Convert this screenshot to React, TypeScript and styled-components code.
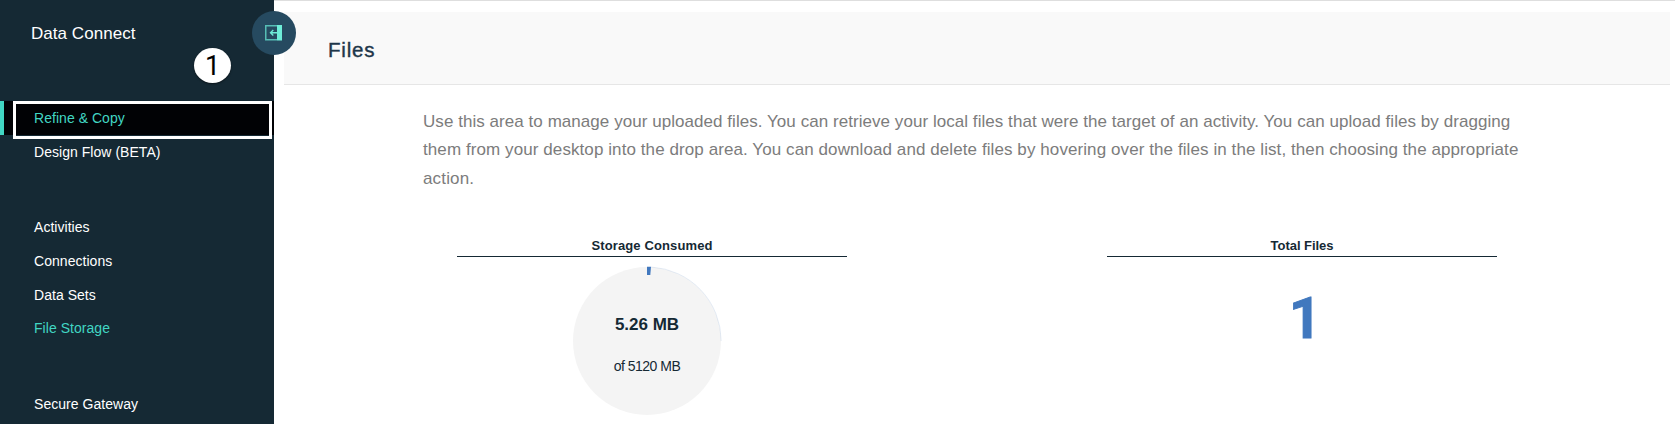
import React from "react";
import styled, { createGlobalStyle } from "styled-components";

const Global = createGlobalStyle`
  * { box-sizing: border-box; }
  body { margin: 0; background: #fff; overflow: hidden; font-family: "Liberation Sans", Arial, sans-serif; }
`;
const Page = styled.div`
  display: flex;
  height: 424px;
  overflow: hidden;
`;
const Sidebar = styled.aside`
  position: relative;
  width: 274px;
  flex: none;
  background: #152934;
  color: #fff;
`;
const Brand = styled.div`
  height: 101px;
  padding: 24px 0 0 31px;
  font-size: 17px;
  line-height: 20px;
  letter-spacing: 0.04px;
`;
const NavGroup = styled.nav`
  display: flex;
  flex-direction: column;
  margin-bottom: 42.1px;
`;
const NavItem = styled.a<{ $current?: boolean; $accent?: boolean }>`
  height: 33.65px;
  padding-left: ${(p) => (p.$current ? 30 : 34)}px;
  border-left: ${(p) => (p.$current ? "4px solid #41d6c3" : "0")};
  background: ${(p) => (p.$current ? "#010205" : "transparent")};
  color: ${(p) => (p.$accent ? "#41d6c3" : "#fff")};
  font-size: 14px;
  line-height: 34px;
  letter-spacing: 0.04px;
`;
const Highlight = styled.div`
  position: absolute;
  left: 13px;
  top: 101px;
  width: 259px;
  height: 38px;
  border: 3px solid #fff;
`;
const Step = styled.div`
  position: absolute;
  left: 194px;
  top: 48px;
  width: 37px;
  height: 35px;
  border-radius: 50%;
  background: #fff;
  color: #000;
  font-family: Roboto, sans-serif;
  font-size: 27px;
  line-height: 36px;
  text-align: center;
  box-shadow: 0 1px 2px rgba(0, 0, 0, 0.5);
`;
const Collapse = styled.button`
  position: absolute;
  left: 252px;
  top: 11px;
  width: 44px;
  height: 44px;
  padding: 0;
  border: 0;
  border-radius: 50%;
  background: #264a60;
  display: flex;
  align-items: center;
  justify-content: center;
`;
const Main = styled.main`
  flex: 1;
  border-top: 1px solid #dedede;
  padding: 11px 5px 0 10px;
`;
const Header = styled.header`
  height: 73px;
  padding: 24px 0 0 44px;
  background: #f9f9f9;
  border-bottom: 1px solid #e6e6e6;
`;
const Title = styled.h1`
  margin: 0;
  color: #1d3649;
  font-size: 20.5px;
  line-height: 28px;
  font-weight: 400;
  -webkit-text-stroke: 0.4px #1d3649;
  letter-spacing: 0.8px;
`;
const Intro = styled.p`
  height: 85px;
  margin: 23px 0 0 139px;
  color: #7c7c7c;
  font-size: 17px;
  line-height: 28.4px;
`;
const Line = styled.span<{ $spacing: number }>`
  display: block;
  white-space: nowrap;
  letter-spacing: ${(p) => p.$spacing}px;
`;
const Stats = styled.section`
  display: flex;
  gap: 260px;
  margin: 44px 0 0 173px;
`;
const Stat = styled.div`
  width: 390px;
`;
const StatTitle = styled.h2<{ $spacing: number }>`
  margin: 0;
  height: 20px;
  border-bottom: 1px solid #152934;
  color: #152934;
  font-size: 13px;
  line-height: 17px;
  text-align: center;
  letter-spacing: ${(p) => p.$spacing}px;
`;
const Gauge = styled.div`
  display: grid;
  width: 150px;
  height: 150px;
  margin: 9px 0 0 115px;
  > * { grid-area: 1 / 1; }
`;
const GaugeText = styled.div`
  display: flex;
  flex-direction: column;
  align-items: center;
  padding-top: 48px;
  color: #152934;
`;
const Used = styled.strong`
  font-size: 17px;
  line-height: 22px;
`;
const Quota = styled.span`
  margin-top: 20px;
  font-size: 14px;
  line-height: 20px;
  letter-spacing: -0.5px;
`;
const Count = styled.div`
  margin-top: 32px;
  padding-left: 6px;
  color: #4178be;
  font-family: Roboto, sans-serif;
  font-size: 57px;
  line-height: 60px;
  font-weight: 700;
  -webkit-text-stroke: 0.8px #4178be;
  text-align: center;
`;

export default function App() {
  return (
    <Page>
      <Global />
      <Sidebar>
        <Brand>Data Connect</Brand>
        <NavGroup>
          <NavItem $current $accent>Refine &amp; Copy</NavItem>
          <NavItem>Design Flow (BETA)</NavItem>
        </NavGroup>
        <NavGroup>
          <NavItem>Activities</NavItem>
          <NavItem>Connections</NavItem>
          <NavItem>Data Sets</NavItem>
          <NavItem $accent>File Storage</NavItem>
        </NavGroup>
        <NavGroup>
          <NavItem>Secure Gateway</NavItem>
        </NavGroup>
        <Highlight />
        <Step>1</Step>
        <Collapse aria-label="Collapse menu">
          <svg width="18" height="16" viewBox="0 0 18 16">
            <path d="M12 .75H.75V14.75H12" fill="none" stroke="#56bdb5" strokeWidth="1.5" />
            <rect x="12" width="5" height="15.5" fill="#6eedd8" />
            <path d="M12 7.8H5.5M8.3 5L5.5 7.8L8.3 10.6" fill="none" stroke="#6eedd8" strokeWidth="1.4" />
          </svg>
        </Collapse>
      </Sidebar>
      <Main>
        <Header>
          <Title>Files</Title>
        </Header>
        <Intro>
          <Line $spacing={0.05}>Use this area to manage your uploaded files. You can retrieve your local files that were the target of an activity. You can upload files by dragging</Line>
          <Line $spacing={0.085}>them from your desktop into the drop area. You can download and delete files by hovering over the files in the list, then choosing the appropriate</Line>
          <Line $spacing={0.15}>action.</Line>
        </Intro>
        <Stats>
          <Stat>
            <StatTitle $spacing={0.12}>Storage Consumed</StatTitle>
            <Gauge>
              <svg width="150" height="150" viewBox="0 0 150 150">
                <circle cx="75" cy="75" r="74" fill="#f4f4f4" />
                <path d="M79 1A74.2 74.2 0 0 1 149.2 75" fill="none" stroke="#4178be" strokeOpacity=".25" strokeWidth=".5" />
                <path d="M75 .7H79L78.3 9H75Z" fill="#4178be" />
              </svg>
              <GaugeText>
                <Used>5.26 MB</Used>
                <Quota>of 5120 MB</Quota>
              </GaugeText>
            </Gauge>
          </Stat>
          <Stat>
            <StatTitle $spacing={-0.05}>Total Files</StatTitle>
            <Count>1</Count>
          </Stat>
        </Stats>
      </Main>
    </Page>
  );
}
